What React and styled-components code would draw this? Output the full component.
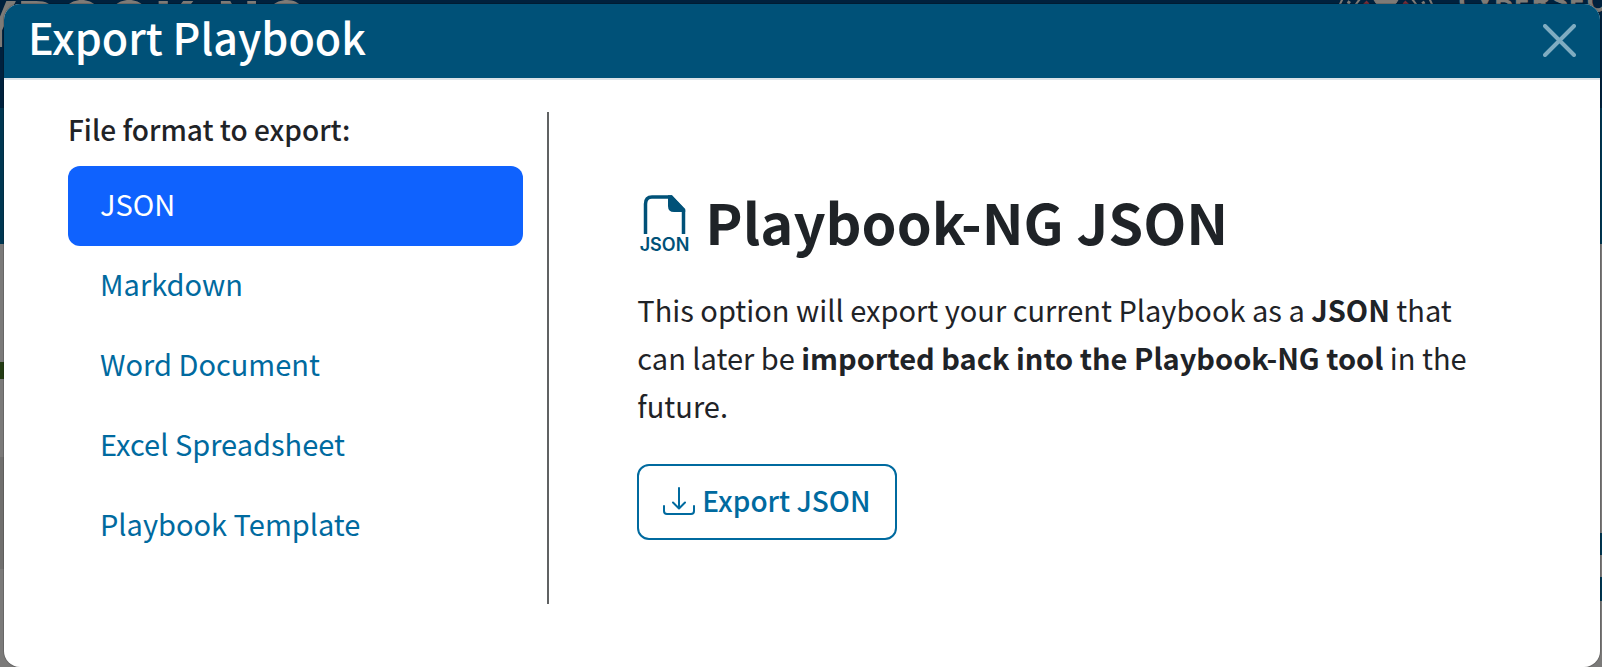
import React, { useState } from 'react';
import styled, { createGlobalStyle } from 'styled-components';

const sans = `'Noto Sans CJK SC', 'Noto Sans', sans-serif`;

const GlobalStyle = createGlobalStyle`
  *, *::before, *::after { box-sizing: border-box; }
  html, body { margin: 0; height: 100%; }
  body { font-family: ${sans}; font-size: 29px; color: #1f2327; overflow: hidden; }
  #root { height: 100%; }
  h1, h2, h3, p { margin: 0; }
  button { font: inherit; cursor: pointer; }
`;

const Screen = styled.div`
  position: relative;
  height: 100%;
  overflow: hidden;
`;

/* The page that lies, dimmed, under the dialog. */
const Backdrop = styled.div`
  height: 100%;
  background: #7b7a79;
  overflow: hidden;
`;

const SiteHeader = styled.header`
  display: flex;
  justify-content: space-between;
  height: 108px;
  background: #00213d;
  color: #7e7b77;
  font-weight: 700;
  white-space: nowrap;
`;

const SiteTitle = styled.div`
  margin: -22px 0 0 -136px;
  font-size: 62px;
  line-height: 84px;
`;

const Agency = styled.div`
  display: flex;
  gap: 20px;
  width: 268px;
  font-size: 29px;
`;

const Seal = styled.svg`
  flex: none;
  width: 104px;
  height: 104px;
  margin-top: -28px;
`;

const AgencyName = styled.div`
  margin-top: -18px;
  line-height: 34px;
`;

const SiteBand = styled.div`
  height: 136px;
  background: #003752;
`;

const SiteContent = styled.div`
  display: flex;
  justify-content: space-between;
`;

const EdgeColumn = styled.div`
  width: 8px;
`;

const EdgeBlock = styled.div`
  height: ${(p) => p.$height}px;
  background: ${(p) => p.$color || 'transparent'};
`;

const Dialog = styled.section`
  position: absolute;
  inset: 4px 2px 0 4px;
  display: flex;
  flex-direction: column;
  overflow: hidden;
  border-radius: 16px;
  background: #fff;
  box-shadow: 0 0 0 1px rgba(0, 0, 0, 0.15);
`;

const DialogHeader = styled.header`
  display: flex;
  align-items: flex-start;
  justify-content: space-between;
  flex: none;
  padding: 0 24px 10px;
  background: #005178;
  border-bottom: 2px solid #dce3e8;
`;

const DialogTitle = styled.h1`
  color: #fff;
  font-size: 43px;
  font-weight: 500;
  line-height: 64px;
`;

const CloseButton = styled.button`
  display: flex;
  margin-top: 20px;
  padding: 0;
  border: 0;
  background: none;
  color: #7facc1;
`;

const DialogBody = styled.div`
  flex: 1;
  display: grid;
  grid-template-columns: 1fr 2fr;
  padding: 32px 88px 63px 64px;
`;

const FormatPane = styled.nav`
  padding-right: 24px;
  border-right: 2px solid #606263;
`;

const PaneLabel = styled.p`
  margin-bottom: 20px;
  font-size: 28px;
  font-weight: 500;
  line-height: 34px;
`;

const FormatButton = styled.button`
  display: block;
  width: 100%;
  height: 80px;
  padding: 0 32px 6px;
  border: 0;
  border-radius: 12px;
  text-align: left;
  background: ${(p) => (p.$active ? '#0f62fe' : 'transparent')};
  color: ${(p) => (p.$active ? '#fff' : '#006a9f')};
`;

const DetailPane = styled.div`
  padding: 72px 40px 0 88px;
`;

const DetailTitle = styled.h2`
  display: flex;
  align-items: flex-start;
  gap: 16px;
  margin-bottom: 28px;
  font-size: 56px;
  font-weight: 700;
  line-height: 73px;

  svg { margin-top: 8px; }
`;

const Description = styled.p`
  margin-bottom: 35px;
  line-height: 48px;
`;

const ExportButton = styled.button`
  display: flex;
  align-items: center;
  gap: 7px;
  height: 76px;
  padding: 0 24px;
  border: 2px solid #006a9f;
  border-radius: 12px;
  background: #fff;
  color: #006a9f;
  font-size: 28px;
  font-weight: 500;
`;

const ExportLabel = styled.span`
  padding-bottom: 4px;
`;

const CloseIcon = () => (
  <svg width="33" height="33" viewBox="0 0 33 33" fill="none" stroke="currentColor" strokeWidth="4" strokeLinecap="round" aria-hidden="true">
    <path d="M2 2 31 31M31 2 2 31" />
  </svg>
);

const JsonFileIcon = () => (
  <svg width="52" height="62" viewBox="0 0 52 62" aria-hidden="true">
    <path d="M8.500 42V12Q8.500 5 15 5H34L46.500 18.500V42" fill="none" stroke="#005178" strokeWidth="3.500" />
    <path d="M31 3.300H35L48.200 17V20H37Q31 20 31 14Z" fill="#005178" />
    <text x="27.500" y="59" textAnchor="middle" fontFamily="Inter, 'Liberation Sans', sans-serif" fontSize="18" fontWeight="600" fill="#005178">JSON</text>
  </svg>
);

const DownloadIcon = () => (
  <svg width="32" height="32" viewBox="0 0 32 32" fill="none" stroke="currentColor" strokeWidth="2" strokeLinecap="round" strokeLinejoin="round" aria-hidden="true">
    <path d="M1 20V25Q1 28 4 28H28Q31 28 31 25V20M16 2V22M10 16.500 16 22.500 22 16.500" />
  </svg>
);

const formats = ['JSON', 'Markdown', 'Word Document', 'Excel Spreadsheet', 'Playbook Template'];

export default function App() {
  const [selected, setSelected] = useState('JSON');
  return (
    <Screen>
      <GlobalStyle />
      <Backdrop aria-hidden="true">
        <SiteHeader>
          <SiteTitle>PLAYBOOK-NG</SiteTitle>
          <Agency>
            <Seal viewBox="0 0 104 104" fill="none" stroke="#7e7b77">
              <circle cx="52" cy="52" r="50" strokeWidth="2" />
              <circle cx="52" cy="52" r="43" strokeWidth="3" strokeDasharray="3 3" />
              <circle cx="52" cy="52" r="36" strokeWidth="2" />
              <path d="M26 38 34 30M70 30 78 38" stroke="#722c38" strokeWidth="4" />
              <path d="M40 28H64L60 34H44Z" fill="#7e7b77" />
            </Seal>
            <AgencyName>CYBERSECURITY</AgencyName>
          </Agency>
        </SiteHeader>
        <SiteBand />
        <SiteContent>
          <EdgeColumn>
            <EdgeBlock $height={118} />
            <EdgeBlock $height={17} $color="#243c14" />
            <EdgeBlock $height={78} />
            <EdgeBlock $height={112} $color="#706f6e" />
          </EdgeColumn>
          <EdgeColumn>
            <EdgeBlock $height={289} />
            <EdgeBlock $height={22} $color="#003752" />
            <EdgeBlock $height={22} />
            <EdgeBlock $height={24} $color="#003752" />
          </EdgeColumn>
        </SiteContent>
      </Backdrop>
      <Dialog role="dialog" aria-labelledby="dialog-title">
        <DialogHeader>
          <DialogTitle id="dialog-title">Export Playbook</DialogTitle>
          <CloseButton aria-label="Close"><CloseIcon /></CloseButton>
        </DialogHeader>
        <DialogBody>
          <FormatPane aria-labelledby="format-label">
            <PaneLabel id="format-label">File format to export:</PaneLabel>
            {formats.map((name) => (
              <FormatButton key={name} $active={name === selected} aria-pressed={name === selected} onClick={() => setSelected(name)}>
                {name}
              </FormatButton>
            ))}
          </FormatPane>
          <DetailPane>
            <DetailTitle><JsonFileIcon />Playbook-NG JSON</DetailTitle>
            <Description>
              This option will export your current Playbook as a <b>JSON</b> that can later be{' '}
              <b>imported back into the Playbook-NG tool</b> in the future.
            </Description>
            <ExportButton><DownloadIcon /><ExportLabel>Export JSON</ExportLabel></ExportButton>
          </DetailPane>
        </DialogBody>
      </Dialog>
    </Screen>
  );
}
